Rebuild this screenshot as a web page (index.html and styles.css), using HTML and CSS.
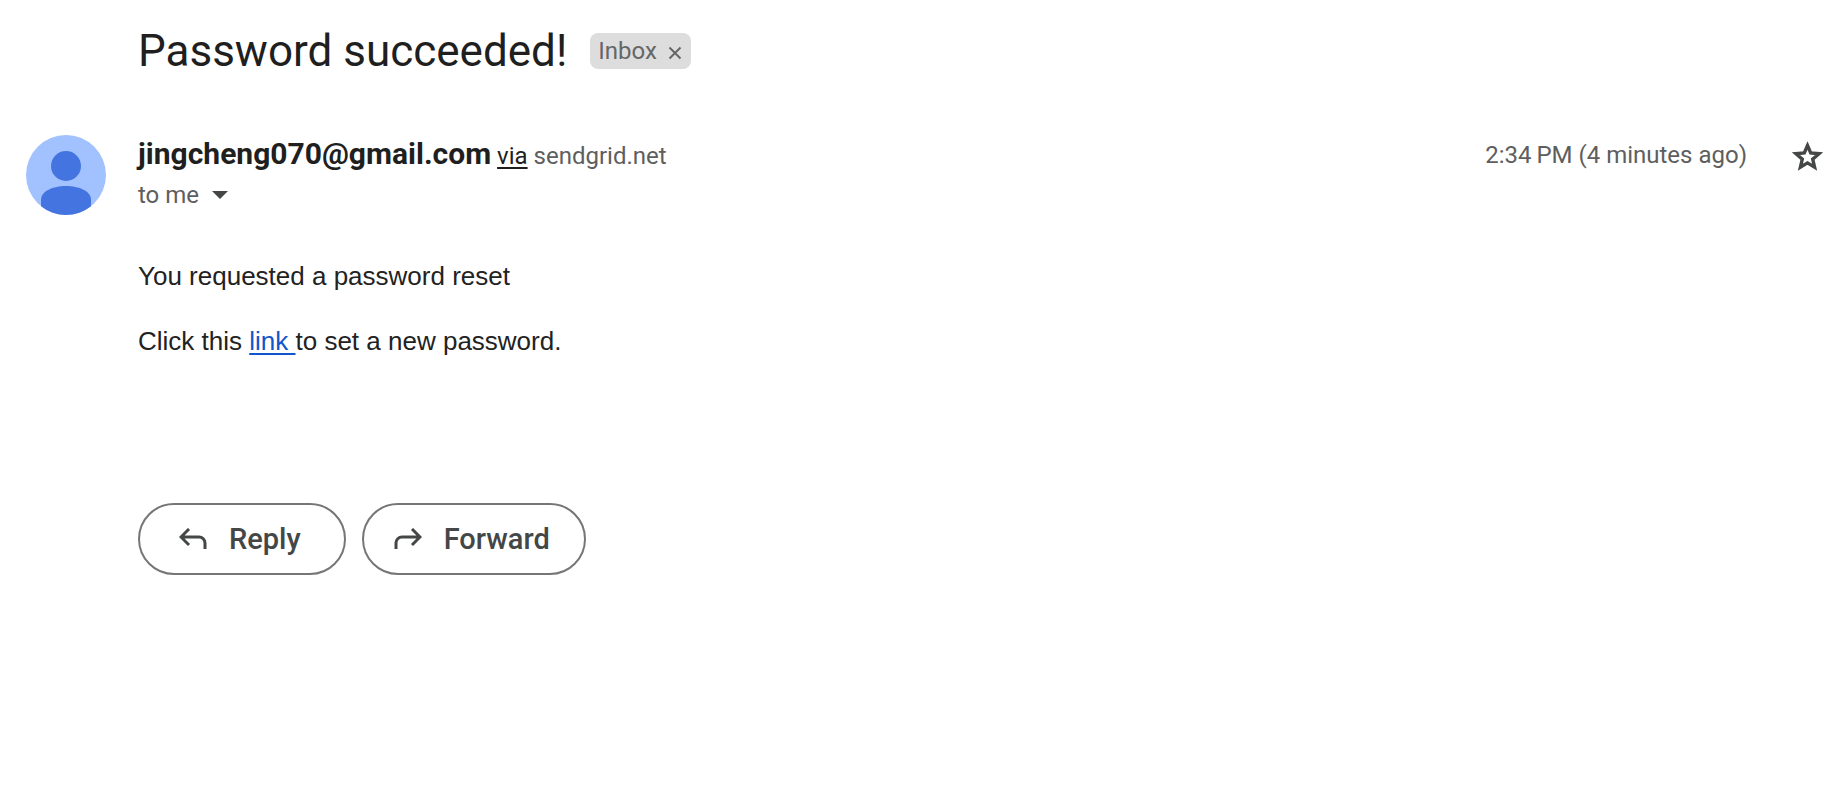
FILE: index.html
```html
<!DOCTYPE html>
<html lang="en">
<head>
<meta charset="utf-8">
<meta name="viewport" content="width=device-width, initial-scale=1">
<title>Password succeeded!</title>
<link rel="stylesheet" href="styles.css">
</head>
<body>
<main class="thread">
  <header class="subject">
    <h1 class="subject-title">Password succeeded!</h1>
    <span class="chip">Inbox
      <button class="chip-close" type="button" aria-label="Remove label Inbox">
        <svg width="14" height="14" viewBox="0 0 14 14" aria-hidden="true"><path d="M1.500 1.500l11 11M12.500 1.500l-11 11" fill="none" stroke="currentColor" stroke-width="2"/></svg>
      </button>
    </span>
  </header>

  <article class="message">
    <svg class="avatar" viewBox="0 0 80 80" role="img" aria-label="Sender avatar">
      <circle cx="40" cy="40" r="40" fill="#a1c2fe"/>
      <circle cx="40" cy="31" r="15" fill="#4474e0"/>
      <path d="M15 71V65C15 56 27 51 40 51s25 5 25 14v6.200A40 40 0 0 1 15 71.200z" fill="#4474e0"/>
    </svg>
    <div class="content">
      <div class="meta">
        <div class="sender"><strong class="sender-name">jingcheng070@gmail.com</strong> <a class="via" href="#via">via</a> sendgrid.net</div>
        <time class="date">2:34&#8201;PM (4 minutes ago)</time>
        <button class="star" type="button" aria-label="Star message">
          <svg width="32" height="32" viewBox="0 0 32 32" aria-hidden="true"><path d="M15.500 6.500L18.700 14 27 14.700 20.700 20.100 22.600 28.200 15.500 23.900 8.400 28.200 10.300 20.100 4 14.700 12.300 14z" fill="none" stroke="currentColor" stroke-width="3.400"/></svg>
        </button>
      </div>
      <button class="recipients" type="button">to me
        <svg width="16" height="8" viewBox="0 0 16 8" aria-hidden="true"><path d="M0 0h16L8 8z" fill="#444746"/></svg>
      </button>
      <div class="body">
        <p>You requested a password reset</p>
        <p>Click this <a class="link" href="#reset">link </a>to set a new password.</p>
      </div>
      <div class="actions">
        <button class="action action-reply" type="button">
          <svg width="28" height="22" viewBox="0 0 28 22" aria-hidden="true"><path d="M10 1L2 9l8 8M2 9h18a6 6 0 0 1 6 6v6" fill="none" stroke="currentColor" stroke-width="3"/></svg>
          Reply
        </button>
        <button class="action" type="button">
          <svg width="28" height="22" viewBox="0 0 28 22" aria-hidden="true"><path d="M18 1l8 8-8 8M26 9H8a6 6 0 0 0-6 6v6" fill="none" stroke="currentColor" stroke-width="3"/></svg>
          Forward
        </button>
      </div>
    </div>
  </article>
</main>
</body>
</html>
```
FILE: styles.css
```css
* { box-sizing: border-box; }

body {
  margin: 0;
  background: #fff;
  color: #1f1f1f;
  font-family: "Google Sans", Roboto, sans-serif;
  font-size: 24px;
  line-height: 32px;
}

button {
  padding: 0;
  border: 0;
  background: none;
  color: inherit;
  font: inherit;
  cursor: pointer;
}

svg { display: block; flex: none; }

.thread { padding: 23px 20px 24px 26px; }

.subject {
  display: flex;
  align-items: center;
  gap: 23px;
  padding-left: 112px;
}

.subject-title {
  margin: 0;
  font-size: 44px;
  font-weight: 400;
  line-height: 56px;
}

.chip {
  display: flex;
  align-items: center;
  gap: 11px;
  height: 36px;
  padding: 0 9px 0 8px;
  border-radius: 8px;
  background: #ddd;
  color: #666;
}

.chip-close { padding-top: 4px; }

.message {
  display: flex;
  align-items: flex-start;
  gap: 32px;
  margin-top: 56px;
}

.avatar { flex: none; width: 80px; height: 80px; }

.content { flex: 1; min-width: 0; }

.meta {
  display: flex;
  align-items: center;
  height: 40px;
  color: #5e5e5e;
}

.sender { flex: 1; }

.sender-name {
  color: #1f1f1f;
  font-size: 30px;
  font-weight: 700;
}

.via {
  color: #1f1f1f;
  text-underline-offset: 3px;
  text-decoration-thickness: 2px;
}

.star {
  margin-left: 45px;
  color: #444746;
}

.recipients {
  display: flex;
  align-items: center;
  gap: 13px;
  height: 40px;
  color: #5e5e5e;
}

.body {
  margin-top: 42px;
  color: #222;
  font-family: "Liberation Sans", Arial, sans-serif;
  font-size: 26px;
  line-height: 39px;
}

.body p { margin: 0 0 26px; }

.link {
  color: #15c;
  text-underline-offset: 3px;
  text-decoration-thickness: 2px;
}

.actions {
  display: flex;
  gap: 16px;
  margin-top: 142px;
}

.action {
  display: flex;
  align-items: center;
  gap: 22px;
  height: 72px;
  padding: 0 34px 0 30px;
  border: 2px solid #747775;
  border-radius: 36px;
  color: #444746;
  font-size: 29px;
  font-weight: 500;
}

.action-reply { padding: 0 43px 0 39px; }
```
